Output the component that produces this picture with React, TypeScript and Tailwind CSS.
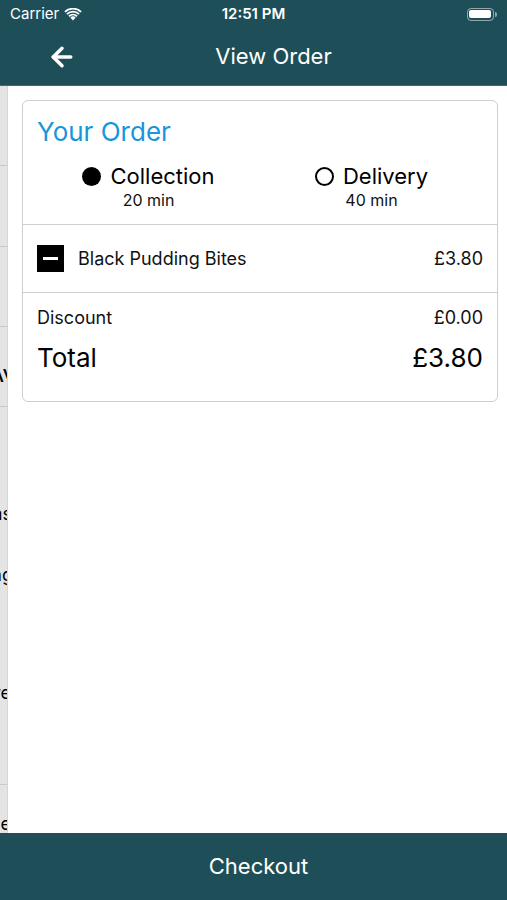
import { ArrowLeft } from "lucide-react";

const font = { fontFamily: '"Inter", "Liberation Sans", sans-serif' };

function StatusBar() {
  return (
    <div className="flex h-[28px] items-center justify-between px-[10px] text-[15px] text-white">
      <div className="flex w-[120px] items-center gap-[5px]">
        <span>Carrier</span>
        <svg width="18" height="13" viewBox="0 0 18 13" fill="white">
          <path d="M9 12.5 L6.3 9.6 A4 4 0 0 1 11.7 9.6 Z" />
          <path d="M4.4 7.6 A6.8 6.8 0 0 1 13.6 7.6 L12.4 8.9 A5 5 0 0 0 5.6 8.9 Z" />
          <path d="M2.3 5.4 A9.8 9.8 0 0 1 15.7 5.4 L14.5 6.7 A8 8 0 0 0 3.5 6.7 Z" />
          <path d="M0.3 3.2 A12.8 12.8 0 0 1 17.7 3.2 L16.5 4.5 A11 11 0 0 0 1.5 4.5 Z" />
        </svg>
      </div>
      <span className="font-semibold">12:51 PM</span>
      <div className="flex w-[120px] items-center justify-end">
        <div className="flex h-[13px] w-[27px] items-center rounded-[4px] border border-white/50 p-[1.5px]">
          <div className="h-full w-full rounded-[2px] bg-white" />
        </div>
        <div className="ml-[1px] h-[5px] w-[2px] rounded-r-sm bg-white/50" />
      </div>
    </div>
  );
}

function LeftStrip() {
  return (
    <div className="w-[8px] shrink-0 overflow-hidden border-r border-[#d6d6d6] bg-[#e4e4e4] text-[18px] text-black">
      <div className="-ml-[192px] flex w-[200px] flex-col">
        <div className="h-[80px] border-b border-[#c9c9c9]" />
        <div className="h-[81px] border-b border-[#c9c9c9]" />
        <div className="h-[80px] border-b border-[#c9c9c9]" />
        <div className="flex h-[80px] items-end justify-end border-b border-[#c9c9c9] pb-[20px] text-[24px] leading-none">
          <span className="-mr-[8px]">Av</span>
        </div>
        <div className="flex h-[378px] flex-col items-end border-b border-[#c9c9c9] pt-[98px] leading-none">
          <span className="-mr-[4px]">items</span>
          <span className="-mr-[5px] mt-[43px]">thing</span>
          <span className="-mr-[3px] mt-[100px]">more</span>
        </div>
        <div className="flex flex-col items-end pt-[30px] leading-none">
          <span className="-mr-[3px]">Table</span>
        </div>
      </div>
    </div>
  );
}

function Option({ label, time, selected }: { label: string; time: string; selected: boolean }) {
  return (
    <div className="flex flex-1 flex-col items-center">
      <div className="flex items-center gap-[9px]">
        {selected ? (
          <div className="h-[19px] w-[19px] rounded-full bg-black" />
        ) : (
          <div className="h-[19px] w-[19px] rounded-full border-[2px] border-black" />
        )}
        <span className="text-[22px] leading-[28px] text-black">{label}</span>
      </div>
      <span className="text-[16px] leading-[20px] text-[#111]">{time}</span>
    </div>
  );
}

export default function App() {
  return (
    <div className="flex h-[900px] w-full flex-col bg-white" style={font}>
      <div className="shrink-0 bg-[#1e4f59]">
        <StatusBar />
        <div className="flex h-[58px] items-center border-b border-[#3d6b74] px-[47px]">
          <ArrowLeft size={30} strokeWidth={2.8} color="white" />
          <div className="flex-1 pl-[40px] text-center text-[22px] text-white">View Order</div>
          <div className="w-[30px]" />
        </div>
      </div>

      <div className="flex min-h-0 flex-1">
        <LeftStrip />
        <div className="flex-1 pl-[14px] pr-[9px] pt-[14px]">
          <div className="rounded-[6px] border border-[#cfcfcf] bg-white">
            <div className="px-[14px] pt-[15px] pb-[14px]">
              <div className="text-[26px] leading-[32px] text-[#1a95db]">Your Order</div>
              <div className="mt-[14px] flex">
                <Option label="Collection" time="20 min" selected />
                <Option label="Delivery" time="40 min" selected={false} />
              </div>
            </div>
            <div className="flex h-[68px] items-center border-t border-[#d0d0d0] px-[14px]">
              <div className="flex h-[27px] w-[27px] items-center justify-center bg-black">
                <div className="h-[3px] w-[15px] bg-white" />
              </div>
              <span className="ml-[14px] flex-1 text-[18px] text-[#111]">Black Pudding Bites</span>
              <span className="text-[18px] text-[#111]">£3.80</span>
            </div>
            <div className="border-t border-[#d0d0d0] px-[14px] pt-[13px] pb-[27px]">
              <div className="flex justify-between text-[18px] leading-[24px] text-[#111]">
                <span>Discount</span>
                <span>£0.00</span>
              </div>
              <div className="mt-[12px] flex justify-between text-[26px] leading-[32px] text-black">
                <span>Total</span>
                <span>£3.80</span>
              </div>
            </div>
          </div>
        </div>
      </div>

      <div className="flex h-[67px] shrink-0 items-center justify-center bg-[#1e4f59] pl-[10px] text-[22px] text-white">
        Checkout
      </div>
    </div>
  );
}
